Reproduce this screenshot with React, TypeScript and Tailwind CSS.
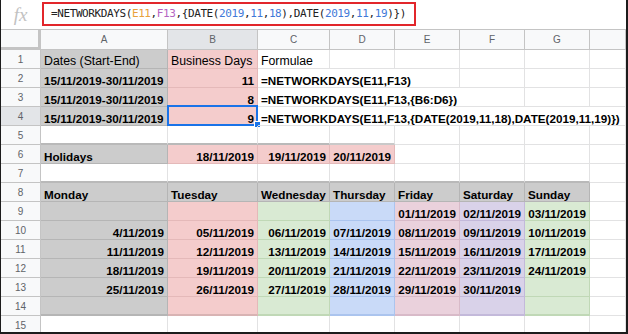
import React from "react";

type Fill = "g" | "p" | "gr" | "bl" | "pk" | "pu" | "w";

type Cell = {
  t?: string;
  f?: Fill;
  right?: boolean;
  bold?: boolean;
  span?: string;
  extra?: string;
};

const fills: Record<Fill, string> = {
  g: "bg-[#cccccc] border-[#b5b5b5]",
  p: "bg-[#f4cccc] border-[#e4b9b9]",
  gr: "bg-[#d9ead3] border-[#c0d8b6]",
  bl: "bg-[#c9daf8] border-[#abc4ee]",
  pk: "bg-[#ead1dc] border-[#d8bac8]",
  pu: "bg-[#d9d2e9] border-[#c3b9da]",
  w: "border-[#e2e2e3]",
};

const cols = ["A", "B", "C", "D", "E", "F", "G", ""];

const d = (t: string, f: Fill): Cell => ({ t, f, right: true, bold: true });
const e = (f: Fill, extra = ""): Cell => ({ f, extra });

const rows: Cell[][] = [
  [
    { t: "Dates (Start-End)", f: "g" },
    { t: "Business Days", f: "p" },
    { t: "Formulae", f: "w" },
    e("w"), e("w"), e("w"), e("w"), e("w"),
  ],
  [
    { t: "15/11/2019-30/11/2019", f: "g", bold: true },
    d("11", "p"),
    { t: "=NETWORKDAYS(E11,F13)", f: "w", bold: true, span: "col-span-3" },
    e("w"), e("w"), e("w"),
  ],
  [
    { t: "15/11/2019-30/11/2019", f: "g", bold: true },
    d("8", "p"),
    { t: "=NETWORKDAYS(E11,F13,{B6:D6})", f: "w", bold: true, span: "col-span-4" },
    e("w"), e("w"),
  ],
  [
    { t: "15/11/2019-30/11/2019", f: "g", bold: true },
    d("9", "p"),
    { t: "=NETWORKDAYS(E11,F13,{DATE(2019,11,18),DATE(2019,11,19)})", f: "w", bold: true, span: "col-span-6" },
  ],
  [
    e("w", "border-b-2 border-b-[#b9b9b9]"),
    e("w", "border-b-2 border-b-[#b9b9b9]"),
    e("w", "border-b-2 border-b-[#b9b9b9]"),
    e("w", "border-b-2 border-b-[#c9c9c9]"),
    e("w"), e("w"), e("w"), e("w"),
  ],
  [
    { t: "Holidays", f: "g", bold: true },
    d("18/11/2019", "p"),
    d("19/11/2019", "p"),
    d("20/11/2019", "p"),
    e("w"), e("w"), e("w"), e("w"),
  ],
  [
    e("w", "border-b-2 border-b-[#b9b9b9]"),
    e("w", "border-b-2 border-b-[#b9b9b9]"),
    e("w", "border-b-2 border-b-[#b9b9b9]"),
    e("w", "border-b-2 border-b-[#b9b9b9]"),
    e("w", "border-b-2 border-b-[#b9b9b9]"),
    e("w", "border-b-2 border-b-[#b9b9b9]"),
    e("w", "border-b-2 border-b-[#b9b9b9]"),
    e("w"),
  ],
  [
    { t: "Monday", f: "g", bold: true },
    { t: "Tuesday", f: "g", bold: true },
    { t: "Wednesday", f: "g", bold: true },
    { t: "Thursday", f: "g", bold: true },
    { t: "Friday", f: "g", bold: true },
    { t: "Saturday", f: "g", bold: true },
    { t: "Sunday", f: "g", bold: true },
    e("w"),
  ],
  [
    e("g"), e("p"), e("gr"), e("bl"),
    d("01/11/2019", "pk"), d("02/11/2019", "pu"), d("03/11/2019", "gr"),
    e("w"),
  ],
  [
    d("4/11/2019", "g"), d("05/11/2019", "p"), d("06/11/2019", "gr"), d("07/11/2019", "bl"),
    d("08/11/2019", "pk"), d("09/11/2019", "pu"), d("10/11/2019", "gr"),
    e("w"),
  ],
  [
    d("11/11/2019", "g"), d("12/11/2019", "p"), d("13/11/2019", "gr"), d("14/11/2019", "bl"),
    d("15/11/2019", "pk"), d("16/11/2019", "pu"), d("17/11/2019", "gr"),
    e("w"),
  ],
  [
    d("18/11/2019", "g"), d("19/11/2019", "p"), d("20/11/2019", "gr"), d("21/11/2019", "bl"),
    d("22/11/2019", "pk"), d("23/11/2019", "pu"), d("24/11/2019", "gr"),
    e("w"),
  ],
  [
    d("25/11/2019", "g"), d("26/11/2019", "p"), d("27/11/2019", "gr"), d("28/11/2019", "bl"),
    d("29/11/2019", "pk"), d("30/11/2019", "pu"), e("gr"),
    e("w"),
  ],
  [
    e("g", "border-b-2 border-b-[#b5b5b5]"),
    e("p", "border-b-2 border-b-[#d8b3b3]"),
    e("gr", "border-b-2"),
    e("bl", "border-b-2"),
    e("pk", "border-b-2"),
    e("pu", "border-b-2"),
    e("gr", "border-b-2"),
    e("w"),
  ],
  [e("w"), e("w"), e("w"), e("w"), e("w"), e("w"), e("w"), e("w")],
];

function FormulaBar() {
  return (
    <div className="h-[30px] flex items-center border-b border-[#c4c4c4] bg-white">
      <div className="w-[41px] flex justify-center pr-[2px]">
        <span className="text-[19px] italic text-[#c2c2c2] leading-none font-['Liberation_Serif',serif]">
          fx
        </span>
      </div>
      <div className="w-[374px] h-[24px] -mt-[1px] border-2 border-[#e2262b] flex items-center pl-[7px] font-['DejaVu_Sans_Mono',monospace] text-[11px] tracking-[-0.4px] text-[#222] whitespace-nowrap">
        <span>=NETWORKDAYS(</span>
        <span className="text-[#e8a23c]">E11</span>
        <span>,</span>
        <span className="text-[#b565c2]">F13</span>
        <span>,{"{"}DATE(</span>
        <span className="text-[#3f79d8]">2019</span>
        <span>,</span>
        <span className="text-[#3f79d8]">11</span>
        <span>,</span>
        <span className="text-[#3f79d8]">18</span>
        <span>),DATE(</span>
        <span className="text-[#3f79d8]">2019</span>
        <span>,</span>
        <span className="text-[#3f79d8]">11</span>
        <span>,</span>
        <span className="text-[#3f79d8]">19</span>
        <span>){"}"})</span>
      </div>
    </div>
  );
}

function DataCell({ cell, selected }: { cell: Cell; selected?: boolean }) {
  const f = fills[cell.f ?? "w"];
  const weight = cell.bold ? "font-bold text-[11.7px]" : "font-normal text-[12.3px]";
  return (
    <div
      className={`relative flex items-end border-r border-b ${f} ${cell.span ?? ""} ${cell.extra ?? ""} ${
        cell.right ? "justify-end" : "justify-start"
      }`}
    >
      {cell.t && (
        <span className={`px-[3px] leading-[13px] whitespace-nowrap text-black ${weight}`}>{cell.t}</span>
      )}
      {selected && (
        <>
          <div className="absolute -left-px -top-[2px] -right-px -bottom-[1px] border-2 border-[#1a73e8]" />
          <div className="absolute -right-[4px] -bottom-[3px] w-[7px] h-[7px] bg-[#1a73e8] border border-white" />
        </>
      )}
    </div>
  );
}

export default function App() {
  return (
    <div className="w-[628px] h-[334px] overflow-hidden bg-white border-l border-r-2 border-b-2 border-[#1c1c1c] font-['Liberation_Sans',Arial,sans-serif]">
      <FormulaBar />

      <div className="grid grid-cols-[40px_127px_90px_72px_65px_65px_65px_65px_1fr] grid-rows-[20px_repeat(15,19px)]">
        {/* Column headers */}
        <div className="bg-[#f8f9fa] border-r-[3px] border-b-[3px] border-[#c4c4c4]" />
        {cols.map((c, i) => (
          <div
            key={c + i}
            className={`flex items-center justify-center border-r border-b border-[#c4c4c4] text-[10px] text-[#5f6368] ${
              c === "B" ? "bg-[#e3e5e8]" : "bg-[#f8f9fa]"
            }`}
          >
            {c}
          </div>
        ))}

        {/* Rows */}
        {rows.map((row, r) => (
          <React.Fragment key={r}>
            <div
              className={`flex items-center justify-center border-r border-b border-[#c4c4c4] text-[10px] text-[#5f6368] ${
                r === 3 ? "bg-[#e3e5e8]" : "bg-[#f8f9fa]"
              }`}
            >
              {r + 1}
            </div>
            {row.map((cell, ci) => (
              <DataCell key={ci} cell={cell} selected={r === 3 && ci === 1} />
            ))}
          </React.Fragment>
        ))}
      </div>
    </div>
  );
}
